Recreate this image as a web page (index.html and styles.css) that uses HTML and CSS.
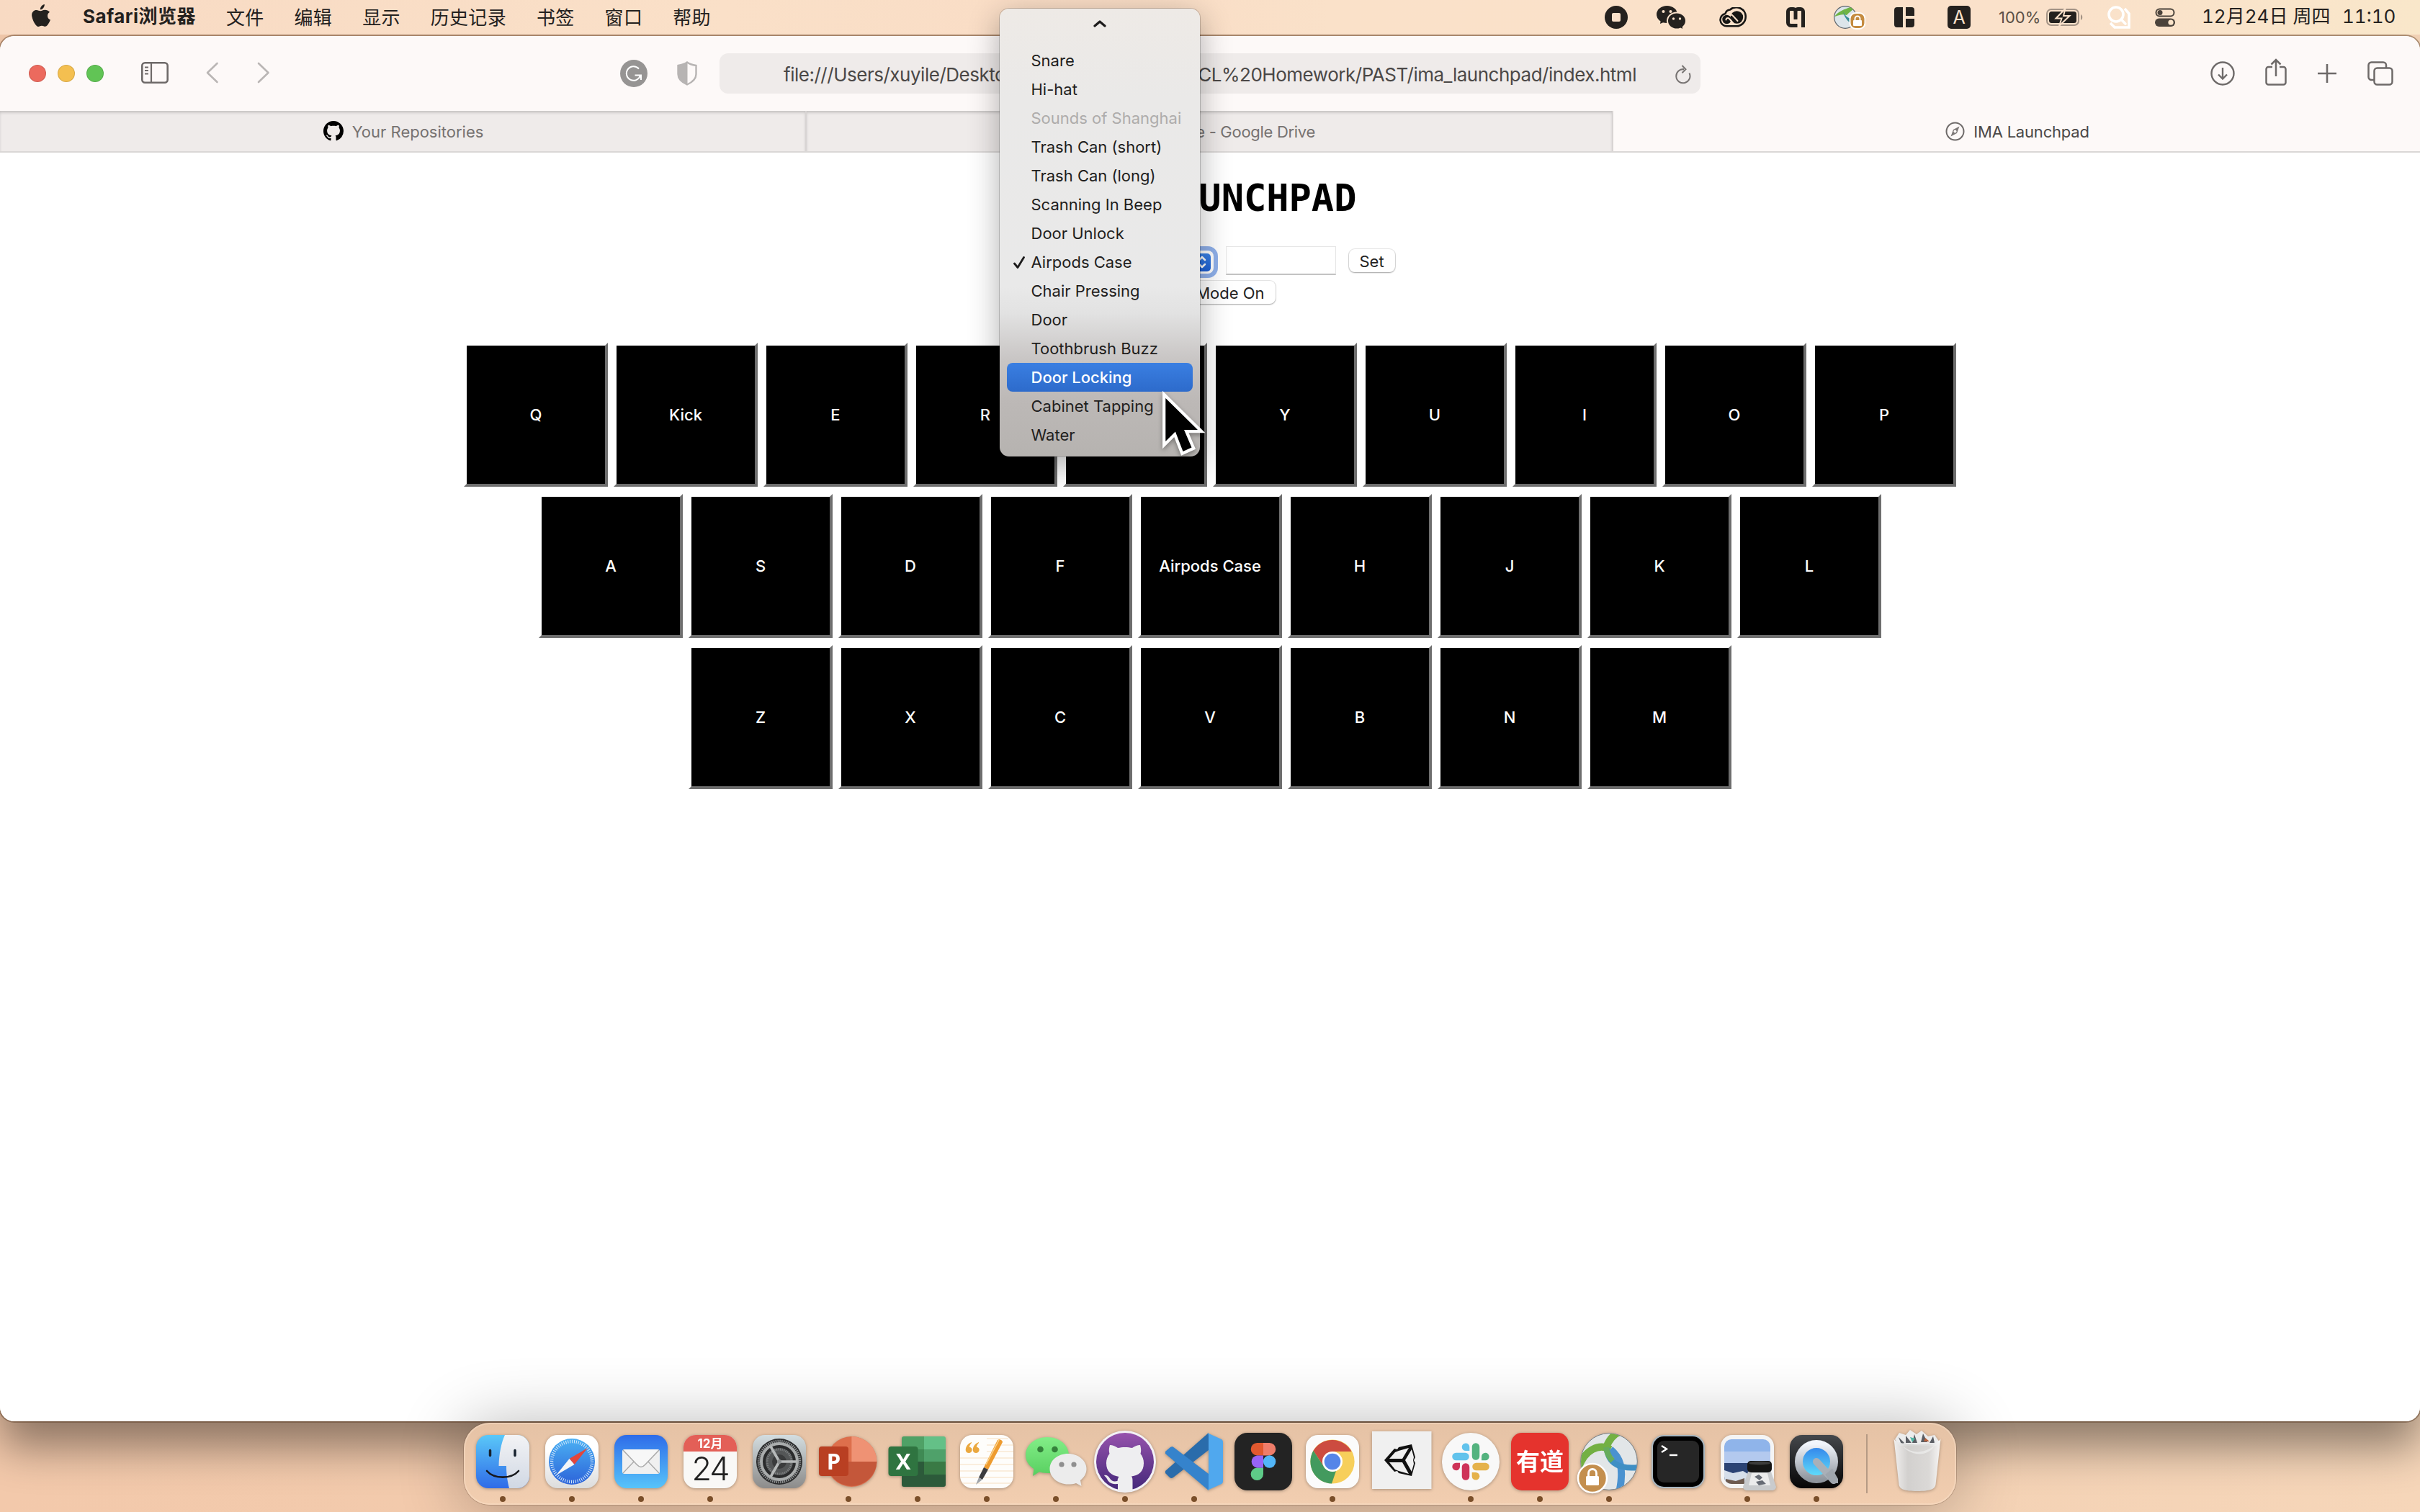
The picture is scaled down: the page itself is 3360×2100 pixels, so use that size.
FILE: index.html
```html
<!DOCTYPE html>
<html lang="zh-CN">
<head>
<meta charset="utf-8">
<title>IMA Launchpad</title>
<link rel="stylesheet" href="styles.css">
</head>
<body>
<header class="menubar">
  <nav class="menus">
    <svg class="apple" width="26" height="32" viewBox="0 0 26 32"><path fill="#24211e" d="M17.8 0c.2 2-.6 3.900-1.700 5.200-1.100 1.300-2.700 2.200-4.200 2.100-.2-1.900.7-3.800 1.700-4.900C14.800 1.100 16.500.2 17.800 0zM25 10.800c-1.700 1.100-3 2.800-3 5.200 0 2.800 1.600 4.700 4 5.600-.7 2.100-1.800 4.100-3.100 5.900-1.200 1.700-2.300 3.300-4.200 3.300s-2.500-1.100-4.700-1.100-2.900 1.100-4.700 1.200c-1.900.1-3.300-1.800-4.500-3.500C2.300 23.900.1 17.600.1 14.900c0-4.300 3-7 6.500-7 2.300 0 3.800 1.300 5.700 1.300 1.800 0 3.300-1.400 6.100-1.400 2.500 0 5 1.100 6.600 3z"/></svg>
    <span class="app-name">Safari浏览器</span>
    <span>文件</span><span>编辑</span><span>显示</span><span>历史记录</span><span>书签</span><span>窗口</span><span>帮助</span>
  </nav>
  <div class="status">
    <svg width="32" height="32" viewBox="0 0 32 32"><circle cx="16" cy="16" r="16" fill="#24211e"/><rect x="10" y="10" width="12" height="12" rx="2" fill="#fae1ca"/></svg>
    <svg width="40" height="32" viewBox="0 0 40 32"><g fill="#24211e"><ellipse cx="14.500" cy="12" rx="14.500" ry="12"/><path d="M6 19l-1 6 7-3z"/><ellipse cx="28" cy="21" rx="13" ry="11.500" stroke="#fae1ca" stroke-width="2"/><path d="M31 29l5 3-.5-5z"/></g><g fill="#fae1ca"><circle cx="9.500" cy="8" r="2"/><circle cx="19.500" cy="8" r="2"/><circle cx="23.500" cy="18" r="1.700"/><circle cx="32.500" cy="18" r="1.700"/></g></svg>
    <svg width="38" height="28" viewBox="0 0 38 28"><path d="M10 26.300a8.800 8.800 0 0 1-1.500-17.400A7.500 7.500 0 0 1 15 3.500 13 12.400 0 0 1 36.700 13.500c0 7-5.700 12.800-12.700 12.800z" fill="none" stroke="#171614" stroke-width="2.600"/><circle cx="24.500" cy="14" r="8.700" fill="#171614"/><circle cx="10.500" cy="17" r="6.200" fill="#171614"/><path d="M9.500 17.500c0-3 3.500-3 5-1l6 7M14.500 11c2-1 4 0 5 1.500l6 6.500" fill="none" stroke="#fae1ca" stroke-width="2" stroke-linecap="round"/></svg>
    <svg width="26" height="28" viewBox="0 0 26 28" fill="none" stroke="#24211e" stroke-width="5"><path d="M15.500 25.500h-9a4 4 0 0 1-4-4V6A3.500 3.500 0 0 1 6 2.500h4a3 3 0 0 1 3 3V17"/><path d="M13 5.500a3 3 0 0 1 3-3h4A3.500 3.500 0 0 1 23.500 6v22"/></svg>
    <svg width="44" height="34" viewBox="0 0 44 34"><circle cx="16" cy="17" r="15.300" fill="#dce5ea" stroke="#5a636a" stroke-width="1.200"/><path d="M1 16C7 8 15 6 23 3l4 3c-3 3-7 5-9 8-6-2-11 0-17 2z" fill="#6fb445"/><path d="M13 9c4 8 8 11 18 10l-5 9c-5-5-11-9-13-19z" fill="#388e98"/><rect x="22.500" y="11" width="21" height="22" rx="8" fill="#c58b3f" stroke="#fff" stroke-width="2"/><rect x="27" y="21" width="12" height="8" rx="1" fill="#fff"/><path d="M29.500 22v-3a3.500 3.500 0 0 1 7 0v3" fill="none" stroke="#fff" stroke-width="2"/></svg>
    <svg width="28" height="28" viewBox="0 0 28 28" fill="#24211e"><path d="M4 0h8v28H4a4 4 0 0 1-4-4V4a4 4 0 0 1 4-4zM16 0h8a4 4 0 0 1 4 4v8H16zM16 16h12v8a4 4 0 0 1-4 4h-8z"/></svg>
    <span class="input-source">A</span>
    <span class="battery-level">100%</span>
    <svg width="51" height="26" viewBox="0 0 51 26"><rect x="1" y="2" width="44" height="22" rx="6" fill="none" stroke="#a39385" stroke-width="2"/><rect x="4" y="5" width="38" height="16" rx="3.500" fill="#24211e"/><path d="M48 9c3 1.500 3 6.500 0 8z" fill="#a39385"/><path d="M26.500 1L13.500 14.500h8L18 25l14.500-14H24z" fill="#24211e" stroke="#fae1ca" stroke-width="2"/></svg>
    <svg width="32" height="32" viewBox="0 0 32 32" fill="none" stroke="#fff" stroke-width="3.600"><circle cx="12" cy="12" r="10"/><path d="M19 19l6 6" stroke-linecap="round"/><path d="M24 4l6 7v19H10l-6-6"/></svg>
    <svg width="28" height="26" viewBox="0 0 28 26"><rect x="1.500" y="1.500" width="25" height="10" rx="5" fill="none" stroke="#4b433b" stroke-width="2"/><circle cx="7" cy="6.500" r="3.500" fill="#4b433b"/><rect y="14.500" width="28" height="11.500" rx="5.700" fill="#4b433b"/><circle cx="22" cy="20.200" r="3.600" fill="#fae4ca"/></svg>
    <span class="clock">12月24日 周四</span>
    <span class="clock">11:10</span>
  </div>
</header>

<div class="window">
  <div class="toolbar">
    <div class="tools-left">
      <i class="light red"></i><i class="light yellow"></i><i class="light green"></i>
      <svg class="sidebar-icon" width="38" height="30" viewBox="0 0 38 30" fill="none" stroke="#6e6a69"><rect x="1.300" y="1.300" width="35.400" height="27.400" rx="4" stroke-width="2.600"/><path d="M14 1v28" stroke-width="2.200"/><path d="M5 7.500h5M5 12h5M5 16.500h5" stroke-width="1.800"/></svg>
      <svg class="back" width="18" height="30" viewBox="0 0 18 30" fill="none" stroke="#bab6b5" stroke-width="2.600" stroke-linecap="round" stroke-linejoin="round"><path d="M15.500 2L2 15l13.500 13"/></svg>
      <svg width="18" height="30" viewBox="0 0 18 30" fill="none" stroke="#bab6b5" stroke-width="2.600" stroke-linecap="round" stroke-linejoin="round"><path d="M2 2l13.500 13L2 28"/></svg>
    </div>
    <div class="tools-mid">
      <svg width="38" height="38" viewBox="0 0 38 38"><circle cx="19" cy="19" r="19" fill="#969493"/><path d="M26 12.500a9.800 9.800 0 1 0 2 9.500M20.500 21.500H29V28" fill="none" stroke="#fff" stroke-width="2"/></svg>
      <svg width="28" height="34" viewBox="0 0 28 34"><path d="M14 1.500c4 3 8 3.800 12.500 4.500v12c0 7-5 11-12.500 14.500C6.500 29 1.500 25 1.500 18V6C6 5.300 10 4.500 14 1.500z" fill="none" stroke="#b7b4b3" stroke-width="2.400"/><path d="M14.500 1.500C10 4.500 6 5.300 1.500 6v12c0 7 5 11 13 14.500z" fill="#b7b4b3"/></svg>
    </div>
    <div class="address">
      <span>file:///Users/xuyile/Deskto</span>
      <span class="url-tail">CL%20Homework/PAST/ima_launchpad/index.html</span>
      <svg class="reload" width="22" height="27" viewBox="0 0 22 27" fill="none" stroke="#777372" stroke-width="2"><path d="M19.500 11.500A9.600 9.600 0 1 1 12 6.200"/><path d="M9.500 1l5 5.300-5 5"/></svg>
    </div>
    <div class="tools-right">
      <svg width="34" height="34" viewBox="0 0 34 34" fill="none" stroke="#6e6a69" stroke-width="2.400"><circle cx="17" cy="17" r="15.500"/><path d="M17 9v15M11 18.500l6 6 6-6"/></svg>
      <svg class="share" width="30" height="38" viewBox="0 0 30 38" fill="none" stroke="#6e6a69" stroke-width="2.500"><path d="M10 12H4.500a3 3 0 0 0-3 3v18.500a3 3 0 0 0 3 3h21a3 3 0 0 0 3-3V15a3 3 0 0 0-3-3H20M15 25V2M8.500 8.500L15 2l6.500 6.500"/></svg>
      <svg width="28" height="28" viewBox="0 0 28 28" stroke="#6e6a69" stroke-width="2.600"><path d="M14 1v26M1 14h26"/></svg>
      <svg width="36" height="34" viewBox="0 0 36 34" fill="none" stroke="#6e6a69" stroke-width="2.500"><rect x="9.500" y="9.500" width="25" height="23" rx="4"/><path d="M9.500 26H5.500a4 4 0 0 1-4-4V5.500a4 4 0 0 1 4-4H22a4 4 0 0 1 4 4v4"/></svg>
    </div>
  </div>
  <div class="tabs">
    <div class="tab"><svg width="28" height="28" viewBox="0 0 16 16"><path d="M8 0C3.580 0 0 3.580 0 8c0 3.540 2.290 6.530 5.470 7.590.4.070.55-.17.55-.38 0-.19-.01-.82-.01-1.490-2.010.37-2.530-.49-2.690-.94-.09-.23-.48-.94-.82-1.130-.28-.15-.68-.52-.01-.53.63-.01 1.080.58 1.230.82.72 1.210 1.870.87 2.330.66.07-.52.28-.87.51-1.070-1.780-.2-3.640-.89-3.640-3.950 0-.87.31-1.590.82-2.150-.08-.2-.36-1.020.08-2.120 0 0 .67-.21 2.200.82.640-.18 1.320-.27 2-.27s1.360.09 2 .27c1.530-1.040 2.200-.82 2.200-.82.440 1.100.16 1.920.08 2.120.51.560.82 1.270.82 2.150 0 3.070-1.870 3.750-3.650 3.950.29.250.54.730.54 1.480 0 1.070-.01 1.930-.01 2.200 0 .21.150.46.550.38A8.010 8.010 0 0 0 16 8c0-4.420-3.580-8-8-8z"/></svg><span>Your Repositories</span></div>
    <div class="tab tab-drive"><span>e - Google Drive</span></div>
    <div class="tab active"><svg width="27" height="27" viewBox="0 0 27 27"><circle cx="13.500" cy="13.500" r="12" fill="none" stroke="#6e6a69" stroke-width="2"/><path d="M19.500 6.500l-3.500 9.500-8.500 4.500 3.500-9.500z" fill="#7c7877"/><circle cx="13.500" cy="13.500" r="2" fill="#fdf9f8"/></svg><span>IMA Launchpad</span></div>
  </div>
  <main class="page">
    <h1>IMA LAUNCHPAD</h1>
    <div class="controls">
      <div class="select"><span class="stepper"><svg width="20" height="20" viewBox="0 0 20 20" fill="none" stroke="#fff" stroke-width="2.500" stroke-linecap="round" stroke-linejoin="round"><path d="M6 7l4-4 4 4M6 13l4 4 4-4"/></svg></span></div>
      <div class="field"></div>
      <button class="btn set">Set</button>
    </div>
    <div class="controls"><button class="btn mode">Mode On</button></div>
    <div class="keyboard">
      <div class="keys"><button>Q</button><button>Kick</button><button>E</button><button>R</button><button></button><button>Y</button><button>U</button><button>I</button><button>O</button><button>P</button></div>
      <div class="keys"><button>A</button><button>S</button><button>D</button><button>F</button><button>Airpods Case</button><button>H</button><button>J</button><button>K</button><button>L</button></div>
      <div class="keys"><button>Z</button><button>X</button><button>C</button><button>V</button><button>B</button><button>N</button><button>M</button></div>
    </div>
  </main>
</div>

<footer class="dock">
  <div class="app"><svg viewBox="0 0 96 96"><defs><linearGradient id="fb" x2="0" y2="1"><stop stop-color="#5ac8f8"/><stop offset="1" stop-color="#2f6be8"/></linearGradient><linearGradient id="fw" x2="0" y2="1"><stop stop-color="#f3f3f5"/><stop offset="1" stop-color="#d0d8e4"/></linearGradient><linearGradient id="wg" x2="0" y2="1"><stop offset=".3" stop-color="#fff"/><stop offset="1" stop-color="#dcdcdc"/></linearGradient></defs><rect x="11" y="11" width="74" height="74" rx="17" fill="url(#fb)"/><path d="M51 11h17a17 17 0 0 1 17 17v40a17 17 0 0 1-17 17H57c-2-8-4-18-4-31H42.500C43 36 46 22 51 11z" fill="url(#fw)"/><path d="M30.500 32.500v7M65 32.500v7" stroke="#17222e" stroke-width="3.500" stroke-linecap="round"/><path d="M26 61c10 11.500 34 11.500 44 0" fill="none" stroke="#17181c" stroke-width="2.600" stroke-linecap="round"/></svg><i></i></div>
  <div class="app"><svg viewBox="0 0 96 96"><defs><linearGradient id="sb" x2="0" y2="1"><stop stop-color="#4bb0f3"/><stop offset="1" stop-color="#2c63d9"/></linearGradient></defs><rect x="11" y="11" width="74" height="74" rx="17" fill="url(#wg)"/><circle cx="48" cy="48" r="32" fill="url(#sb)"/><circle cx="48" cy="48" r="28" fill="none" stroke="#d9ebfb" stroke-width="4.500" stroke-dasharray="1 1.930"/><path d="M70 29L44.500 44l7 8z" fill="#e2463d"/><path d="M26 67l18.500-23 7 8z" fill="#f4f5f7"/></svg><i></i></div>
  <div class="app"><svg viewBox="0 0 96 96"><defs><linearGradient id="mb" x2="0" y2="1"><stop stop-color="#2e6ce9"/><stop offset="1" stop-color="#57c4fa"/></linearGradient></defs><rect x="11" y="11" width="74" height="74" rx="17" fill="url(#mb)"/><rect x="22" y="31" width="52" height="34" rx="3" fill="#f0f0f0"/><path d="M23 64l16-17M73 64L57 47" stroke="#a9a9a9" stroke-width="1.300"/><path d="M23 32l19 20c4 4.500 8 4.500 12 0l19-20" fill="#f7f7f7" stroke="#a9a9a9" stroke-width="1.500"/></svg><i></i></div>
  <div class="app"><svg viewBox="0 0 96 96"><rect x="11" y="11" width="74" height="74" rx="17" fill="#f9f8f6"/><path d="M28 11h40a17 17 0 0 1 17 17v6H11v-6a17 17 0 0 1 17-17z" fill="#e35f57"/><text x="48" y="29" class="cal-month">12月</text><text x="48" y="74" class="cal-day">24</text></svg><i></i></div>
  <div class="app idle"><svg viewBox="0 0 96 96"><defs><linearGradient id="st" x2="0" y2="1"><stop stop-color="#d3dde0"/><stop offset="1" stop-color="#8c8b8a"/></linearGradient></defs><rect x="11" y="11" width="74" height="74" rx="17" fill="url(#st)"/><circle cx="48" cy="48" r="32" fill="#2a2b2c"/><circle cx="48" cy="48" r="28.500" fill="none" stroke="#8e9192" stroke-width="3.500" stroke-dasharray="1.500 1.300"/><circle cx="48" cy="48" r="25" fill="none" stroke="#a9acac" stroke-width="4"/><circle cx="48" cy="48" r="19" fill="#545657"/><circle cx="48" cy="48" r="17" fill="none" stroke="#7e8182" stroke-width="3" stroke-dasharray="1.300 1.300"/><circle cx="48" cy="48" r="10" fill="#3a3b3c"/><path d="M48 48h24M48 48L36 27M48 48L36 69" stroke="#b6b9b9" stroke-width="3.600"/><circle cx="48" cy="48" r="3" fill="#8c8f90"/></svg><i></i></div>
  <div class="app"><svg viewBox="0 0 96 96"><circle cx="52.400" cy="48" r="35" fill="#dd6f4c"/><path d="M52.400 13a35 35 0 0 1 35 35h-35z" fill="#ef9274"/><path d="M87.400 48a35 35 0 0 1-67 13L32 48z" fill="#c4573a"/><rect x="7" y="27" width="41" height="41" rx="4" fill="#b93f22"/><text x="27.500" y="59" class="office">P</text></svg><i></i></div>
  <div class="app"><svg viewBox="0 0 96 96"><path d="M29 13h28v18H26V16a3 3 0 0 1 3-3z" fill="#4fa166"/><path d="M57 13h27a3 3 0 0 1 3 3v15H57z" fill="#64c087"/><path d="M26 31h31v17H26z" fill="#3f8a54"/><path d="M57 31h30v17H57z" fill="#4fa16a"/><path d="M57 48h30v18H57z" fill="#3a7a45"/><path d="M26 48h31v18h30v14a3 3 0 0 1-3 3H29a3 3 0 0 1-3-3z" fill="#2c5a3a"/><rect x="7.500" y="27" width="41" height="41" rx="4" fill="#2f7440"/><text x="28" y="59" class="office">X</text></svg><i></i></div>
  <div class="app"><svg viewBox="0 0 96 96"><rect x="11" y="11" width="74" height="74" rx="17" fill="#fefdfb"/><path d="M48 16h30M48 25h37M48 34h37M11 43h74M11 52h74M11 61h74M11 70h74M14 78h68" stroke="#f6dfc0"/><path d="M27 21c-9 3-11 15-4 15 6 0 6-8 1-8C24 26 25 24 27 22zM37 21c-9 3-11 15-4 15 6 0 6-8 1-8C34 26 35 24 37 22z" fill="#eba83f"/><path d="M63 18c2-2 7 0 7 3L50 59l-6-3z" fill="#ee9b2f"/><path d="M65 18L47 52" stroke="#fbd58f" stroke-width="1.500"/><path d="M44 56l6 3-8 14-5-3z" fill="#3c3c3e"/><path d="M37 70l5 3-9 7z" fill="#9fa3a8"/></svg><i></i></div>
  <div class="app"><svg viewBox="0 0 96 96"><defs><linearGradient id="wc" x2="0" y2="1"><stop stop-color="#83ee88"/><stop offset="1" stop-color="#58cf60"/></linearGradient></defs><path d="M36 14c17 0 30 11 30 25S53 64 36 64c-4 0-8-.6-11-1.700L16 68l1.500-10C10 53.500 6 47 6 39c0-14 13-25 30-25z" fill="url(#wc)"/><path d="M65 37c14 0 25.500 9.500 25.500 21 0 7-3.500 12-8.500 16l1.500 8-7.500-4c-3 1-7 1.500-11 1.500-14 0-25.500-9.500-25.500-21.500S51 37 65 37z" fill="#ececec"/><g fill="#35823b"><circle cx="26.500" cy="31" r="4.300"/><circle cx="46.500" cy="31" r="4.300"/></g><g fill="#8f8f8f"><circle cx="56" cy="52" r="3.600"/><circle cx="73" cy="52" r="3.600"/></g></svg><i></i></div>
  <div class="app"><svg viewBox="0 0 96 96"><defs><linearGradient id="gh" x2="0" y2="1"><stop stop-color="#9652ac"/><stop offset="1" stop-color="#44287a"/></linearGradient><clipPath id="ghc"><circle cx="48" cy="48" r="42"/></clipPath></defs><circle cx="48" cy="48" r="43" fill="#f3f1f5"/><circle cx="48" cy="48" r="40" fill="url(#gh)"/><path clip-path="url(#ghc)" d="M27 25c4 0 8 2 11 4 6-1.500 14-1.500 20 0 3-2 7-4 11-4 1.500 5 1.500 9 .5 12 3 4 4.500 8 4.500 13 0 12-7 17-17 18.500 1.500 2 1.500 4 1.500 7V86l2 6H36l2-6v-7c-10 1-13-3-15-7-1-2-3-3.500-4-5 3-1 6 1 8 4.500 2.500 4 6 4.500 10.500 3.500 0-2.500 1-4.500 2-6C29 67 22 62 22 50c0-5 1.500-9 4.500-13-1-3-1-7 .5-12z" fill="#eeeef0"/></svg><i></i></div>
  <div class="app"><svg viewBox="0 0 96 96"><path d="M68 8L8 61v3l6 6c2 1.500 3 1 5 0l49-38z" fill="#2a6cab"/><path d="M8 34l7-6c2-1 3-1 5 .5L68 65v23L8 37z" fill="#3583cc"/><path d="M66 8l20 9c1.500 1 2 2 2 4v54c0 2-.5 3-2 4l-20 9c1.500-1 2-2 2-4V12c0-2-.5-3-2-4z" fill="#50a8ee"/></svg><i></i></div>
  <div class="app idle"><svg viewBox="0 0 96 96"><rect x="8" y="8" width="80" height="80" rx="18" fill="#232323"/><path d="M48 22h-8.600a8.700 8.700 0 0 0 0 17.400H48z" fill="#e1592f"/><path d="M48 22h8.600a8.700 8.700 0 0 1 0 17.400H48z" fill="#ee7d6a"/><path d="M48 39.400h-8.600a8.700 8.700 0 0 0 0 17.300H48z" fill="#9763f6"/><circle cx="56.600" cy="48" r="8.700" fill="#52b6f8"/><path d="M48 56.700h-8.600A8.700 8.700 0 1 0 48 65.400z" fill="#5ecb88"/></svg><i></i></div>
  <div class="app"><svg viewBox="0 0 96 96"><rect x="11" y="11" width="74" height="74" rx="17" fill="#fbfbfb"/><circle cx="48" cy="48" r="30.600" fill="#f7cf5b"/><path d="M21.500 32.700A30.600 30.600 0 0 1 74.500 34H48L36 55z" fill="#cc4c40"/><path d="M21.500 32.700L36 55l12 7 5-1-6 17.600A30.600 30.600 0 0 1 21.500 32.700z" fill="#439a5e"/><circle cx="48" cy="48" r="14" fill="#fff"/><circle cx="48" cy="48" r="11.300" fill="#5585e8"/></svg><i></i></div>
  <div class="app idle"><svg viewBox="0 0 96 96"><rect x="7" y="6" width="82.500" height="80" fill="#f0f0f0"/><path fill-rule="evenodd" fill="#111" d="M24 46l14-16 4 1 2-3 18-4 5 18-2 4 2 4-5 18-18-4-2-3-4 1zM31 44h18l9-15-14 4-5 2zM31 49l8 10 5 2 14 4-9-16zM62 31l-9 15 9 16 3-11-1-5 1-4z"/></svg><i></i></div>
  <div class="app"><svg viewBox="0 0 96 96"><circle cx="48" cy="48" r="40" fill="#f8f8f8"/><g stroke-width="10.500" stroke-linecap="round"><path d="M55 27.500v13" stroke="#54b37f"/><path d="M27.500 41h13" stroke="#62c3ec"/><path d="M41 55.500v13" stroke="#ce3358"/><path d="M55.500 55h13" stroke="#e5b24a"/></g><path d="M46.300 33v-5.500a5.300 5.300 0 1 0-5.300 5.500z" fill="#62c3ec"/><path d="M63 46.300V41a5.300 5.300 0 1 1 5.500 5.300z" fill="#54b37f"/><path d="M33 49.700V55a5.300 5.300 0 1 1-5.500-5.300z" fill="#ce3358"/><path d="M49.700 63H55a5.300 5.300 0 1 1-5.300 5.500z" fill="#e5b24a"/></svg><i></i></div>
  <div class="app"><svg viewBox="0 0 96 96"><rect x="8" y="8" width="80" height="80" rx="15" fill="#e5332d"/><text x="48" y="60" class="youdao">有道</text></svg><i></i></div>
  <div class="app"><svg viewBox="0 0 96 96"><defs><clipPath id="ac"><circle cx="48" cy="48" r="39"/></clipPath></defs><circle cx="48" cy="48" r="39.300" fill="#e2e6e8" stroke="#77828a" stroke-width="1"/><g clip-path="url(#ac)" fill="none" stroke-width="10"><path d="M50 31c12 10 20 24 12 60" stroke="#4a92d0"/><path d="M6 56c8-24 28-34 44-25M44 28c4-10 10-18 20-22" stroke="#73b043"/><path d="M45 30c2 18 14 29 44 26" stroke="#3f8fc4" stroke-width="8"/><path d="M44 28c1 8 4 14 9 19" stroke="#67ac5c" stroke-width="8"/></g><circle cx="25" cy="71" r="20" fill="#c48f4e" stroke="#fff" stroke-width="2.500"/><rect x="16" y="68" width="18" height="13" rx="1.500" fill="#fff"/><path d="M19.500 69v-5a5.500 5.500 0 0 1 11 0v5" fill="none" stroke="#fff" stroke-width="2.800"/></svg><i></i></div>
  <div class="app idle"><svg viewBox="0 0 96 96"><rect x="11" y="11" width="74" height="74" rx="17" fill="#a9b7c0"/><rect x="13" y="13" width="70" height="70" rx="15" fill="#000"/><rect x="19" y="19" width="58" height="58" rx="9" fill="#262626"/><path d="M25 26l7 4.500-7 4.500" fill="none" stroke="#fff" stroke-width="2.400"/><path d="M36 39h11" stroke="#fff" stroke-width="2.400"/></svg><i></i></div>
  <div class="app"><svg viewBox="0 0 96 96"><defs><clipPath id="pv"><rect x="16" y="17" width="64" height="62" rx="10"/></clipPath></defs><rect x="11" y="11" width="74" height="74" rx="16" fill="#f4f4f4"/><g clip-path="url(#pv)"><path d="M16 17h64v34H16z" fill="#8fb4ea"/><path d="M16 34h64v17H16z" fill="#b3c9ee"/><path d="M16 50h64v30H16z" fill="#2b4374"/><path d="M16 60l12 4 14-3 10 6v14H16z" fill="#d5deea"/><path d="M18 72l14 3 12-4v10H18z" fill="#6d5b50"/></g><path d="M49 62h32l7 21c0 3-3 5-6 5H48c-3 0-6-2-6-5z" fill="#c9cbcd"/><path d="M54 64h22l4 17H50z" fill="#ececec"/><path d="M58 69l6-3 5 4-4 4zM60 76l9-2 5 5-10 2z" fill="#666b74"/><rect x="48" y="47" width="34" height="16" rx="5" fill="#151515"/><ellipse cx="65" cy="50" rx="15" ry="2.500" fill="#3c3c3c"/></svg><i></i></div>
  <div class="app"><svg viewBox="0 0 96 96"><defs><linearGradient id="qt" x2="0" y2="1"><stop stop-color="#45484c"/><stop offset="1" stop-color="#050505"/></linearGradient><linearGradient id="qr" x2="0" y2="1"><stop stop-color="#f1f5fc"/><stop offset="1" stop-color="#8f969e"/></linearGradient><linearGradient id="qi" x2="0" y2="1"><stop stop-color="#2f7de9"/><stop offset="1" stop-color="#64e6fc"/></linearGradient></defs><rect x="11" y="11" width="74" height="74" rx="17" fill="url(#qt)"/><circle cx="48" cy="48" r="24.500" fill="url(#qi)" stroke="url(#qr)" stroke-width="11"/><path d="M48 48l24 26" stroke="#a9b0b8" stroke-width="10" stroke-linecap="round"/><path d="M60 66l10-8 8 14v6h-9z" fill="#9fa6ae"/></svg><i></i></div>
  <div class="divider"></div>
  <div class="app idle"><svg viewBox="0 0 96 96"><defs><linearGradient id="tr"><stop stop-color="#f3f3f3"/><stop offset=".3" stop-color="#d3d3d2"/><stop offset=".75" stop-color="#dcdcdb"/><stop offset="1" stop-color="#fafafa"/></linearGradient></defs><path d="M17 17l6-9 9 3 6-7 9 6 7-5 9 8 9-2 7 10-5 5H24z" fill="#ececec"/><path d="M22 14l8 8-4 2zM32 12l8 10h-8zM44 10l4 12h-7zM56 9l6 12h-9zM70 13l2 9h-7z" fill="#5a5d63"/><path d="M38 14l7 2-4 5z" fill="#4fb7a5"/><path d="M59 15l6 5h-8z" fill="#b8623e"/><path d="M15.500 16c3 11 62 11 65 0l-7 64c-1 6-7 9-25.500 9s-24.500-3-25.500-9z" fill="url(#tr)" fill-opacity=".95"/><path d="M28 27c14 10 28 10 44-1-8 14-30 16-44 1z" fill="#eee" opacity=".7"/></svg><i></i></div>
</footer>

<div class="popup">
  <svg class="scroll-up" width="18" height="10" viewBox="0 0 18 10" fill="none" stroke="#1c1b1b" stroke-width="3.200" stroke-linecap="round" stroke-linejoin="round"><path d="M2 8l7-6 7 6"/></svg>
  <ul>
    <li>Snare</li><li>Hi-hat</li><li class="group">Sounds of Shanghai</li><li>Trash Can (short)</li><li>Trash Can (long)</li><li>Scanning In Beep</li><li>Door Unlock</li>
    <li class="checked"><svg width="16" height="17" viewBox="0 0 16 17" fill="none" stroke="#1c1b1b" stroke-width="2.800" stroke-linecap="round" stroke-linejoin="round"><path d="M1.500 10l4.500 5.500 8.500-14"/></svg>Airpods Case</li>
    <li>Chair Pressing</li><li>Door</li><li>Toothbrush Buzz</li><li class="hover">Door Locking</li><li>Cabinet Tapping</li><li>Water</li>
  </ul>
</div>
<svg class="cursor" width="72" height="104" viewBox="0 0 72 104"><path d="M8.300 14v60l13.600-13.500L32.500 88l12-5.500L34 58h19z" fill="#000" stroke="#fff" stroke-width="8.500" paint-order="stroke"/></svg>
</body>
</html>
```
FILE: styles.css
```css
* { box-sizing: border-box; }
body {
  margin: 0; width: 3360px; height: 2100px; overflow: hidden; position: relative;
  display: flex; flex-direction: column;
  font-family: Inter, "Noto Sans CJK SC", sans-serif; font-size: 22px; color: #1f1e1d;
  background: linear-gradient(90deg, #f3c9ab, #f1ccae 50%, #f6d6b9);
}
svg { display: block; flex: none; }
button { font-family: inherit; font-size: inherit; }

.menubar {
  flex: none; height: 48px; display: flex; justify-content: space-between; align-items: center;
  padding: 0 39px 0 44px; font-size: 26px; color: #24211e;
  background: linear-gradient(90deg, #f8dac3, #fae0c8 30%, #f9dcc5 45%, #fae1c9 55%, #fae1ca 85%, #f9e7ca);
}
.menus { display: flex; align-items: center; gap: 42px; line-height: 44px; letter-spacing: .3px; font-family: "Noto Sans CJK SC", sans-serif; }
.menus span { margin-top: -3px; }
.apple { margin: -5px 3px 0 0; }
.menus .app-name { font-family: Inter, "Noto Sans CJK SC", sans-serif; font-weight: 700; white-space: nowrap; letter-spacing: .45px; }
.status {
  display: grid; align-items: center; line-height: 44px; white-space: nowrap;
  grid-template-columns: 72px 87px 93px 66px 84px 74px 71px 66px 85px 66px 65px 195px 69px;
}
.input-source { width: 32px; height: 32px; border-radius: 5px; background: #24211e; color: #fae1ca; font-size: 25px; line-height: 32px; text-align: center; }
.battery-level { font-size: 22px; color: #5a4f45; }
.clock { font-variant-numeric: tabular-nums; margin-top: -3px; }

.window {
  flex: none; margin-top: 2px; height: 1924px; border-radius: 20px; overflow: hidden; background: #fff;
  display: flex; flex-direction: column;
  box-shadow: 0 0 0 2px rgba(90, 60, 35, .45), 0 36px 60px rgba(0, 0, 0, .42);
  clip-path: inset(-2px 0 -126px 0);
}
.toolbar { flex: none; height: 104px; display: flex; align-items: center; background: #fdf9f8; padding: 0 37px 0 40px; }
.tools-left { display: flex; align-items: center; width: 821px; }
.light { width: 24px; height: 24px; border-radius: 50%; margin-right: 16px; border: 1px solid rgba(0, 0, 0, .12); }
.red { background: #ec6a5e; } .yellow { background: #f4bf50; } .green { background: #61c455; }
.sidebar-icon { margin: 0 52px 0 36px; }
.back { margin-right: 53px; }
.tools-left svg { margin-top: -2px; }
.tools-mid { display: flex; align-items: center; gap: 41px; width: 138px; }
.address { width: 1362px; height: 56px; border-radius: 12px; background: #efebea; display: flex; align-items: center; padding: 2px 13px 0 89px; font-size: 26px; letter-spacing: -.48px; color: #4b4847; white-space: nowrap; }
.url-tail { margin-left: auto; }
.reload { margin-left: 54px; }
.tools-right { margin-left: auto; display: flex; align-items: center; gap: 42px; }
.share { margin-top: -4px; }
.tabs { flex: none; height: 58px; display: grid; grid-template-columns: 1120px 1120px 1fr; border-bottom: 2px solid #dad7d6; }
.tab { display: flex; align-items: center; justify-content: center; gap: 12px; padding-left: 2px; color: #767271; background: #efebea; border-right: 2px solid #d8d4d3; box-shadow: inset 0 3px 4px -1px rgba(0, 0, 0, .2); }
.tab span { margin-top: 2px; }
.tab-drive { justify-content: flex-end; padding-right: 412px; letter-spacing: -.3px; }
.tab.active { background: #fdf9f8; color: #4b4847; border: 0; box-shadow: none; letter-spacing: -.2px; }

.page { flex: 1; display: flex; flex-direction: column; align-items: center; background: #fff; padding-top: 33px; }
h1 { margin: 0 0 35px; font: bold 52px/60px "DejaVu Sans Mono", monospace; color: #000; }
.controls { height: 44px; display: flex; align-items: center; }
.select { width: 261px; height: 32px; margin: 4px 17px 0 0; border-radius: 8px; background: #fff; box-shadow: 0 0 0 6px #8fb0ea; display: flex; justify-content: flex-end; align-items: center; padding-right: 4px; }
.stepper { width: 24px; height: 25px; border-radius: 5px; background: linear-gradient(#3b82e6, #1c5fd4); display: flex; align-items: center; justify-content: center; }
.field { width: 153px; height: 40px; margin-right: 18px; border: 1px solid #e6e6e6; border-bottom: 2px solid #c3c3c3; }
.btn { height: 32px; border: 0; border-radius: 8px; background: #fff; color: #222; padding: 3px 15px 0; line-height: 29px; box-shadow: 0 0 0 1px rgba(0, 0, 0, .09), 0 1px 2px rgba(0, 0, 0, .3); }
.set { width: 64px; }
.mode { width: 181px; text-align: right; }
.keyboard { margin-top: 48px; display: flex; flex-direction: column; align-items: center; gap: 10px; }
.keys { display: flex; gap: 8px; }
.keys button { width: 200px; height: 200px; padding: 0; background: #000; background-clip: padding-box; color: #fff; font-weight: 500; border: 4px solid; border-color: #fff #6e6e6e #6e6e6e #fff; }

.dock {
  align-self: center; margin-top: 2px; height: 114px; position: relative; display: flex; padding: 6px 6px 0;
  border-radius: 36px; background: linear-gradient(#e5c2a5, #f2ceb0);
  box-shadow: inset 0 0 0 2px rgba(255, 235, 215, .3), 0 0 0 1px rgba(90, 60, 40, .25), 0 4px 90px rgba(0, 0, 0, .3);
}
.app { width: 96px; display: flex; flex-direction: column; align-items: center; }
.app svg { width: 96px; height: 96px; filter: drop-shadow(0 1px 2px rgba(0, 0, 0, .3)); }
.app i { width: 8px; height: 8px; border-radius: 50%; background: #7a4f2a; }
.idle i { visibility: hidden; }
.divider { width: 2px; height: 82px; margin: 10px 21px 0; background: #b59a84; }
.cal-month { font: bold 17px Inter, "Noto Sans CJK SC", sans-serif; fill: #fff; text-anchor: middle; }
.cal-day { font: 300 45px Inter, sans-serif; fill: #222; text-anchor: middle; letter-spacing: -2px; }
.office { font: bold 31px "Open Sans", sans-serif; fill: #fff; text-anchor: middle; }
.youdao { font: bold 33px "Noto Sans CJK SC", sans-serif; fill: #fff; text-anchor: middle; }

.popup {
  position: absolute; left: 1388px; top: 12px; width: 278px; height: 622px; border-radius: 13px; padding: 16px 10px 10px;
  background: linear-gradient(#eeeae6, #eae9e8 20%, #e9e9e9 62%, #e2e2e2 68%, #c9c6c5 78%, #bcb8b6 88%, #b6b3b0);
  box-shadow: 0 0 0 1px rgba(0, 0, 0, .18), 0 12px 44px rgba(0, 0, 0, .32);
}
.scroll-up { margin: 0 auto; }
.popup ul { list-style: none; margin: 26px 0 0; padding: 0; }
.popup li { height: 40px; line-height: 40px; padding-left: 33.500px; border-radius: 8px; white-space: nowrap; }
.popup .group { color: #aeacab; }
.popup .checked { display: flex; align-items: center; padding-left: 9px; gap: 8.500px; }
.popup .hover { background: linear-gradient(#3a7fe2, #2d6bcb); color: #fff; font-weight: 500; }
.cursor { position: absolute; left: 1610px; top: 539px; filter: drop-shadow(0 3px 3px rgba(0, 0, 0, .35)); }
```
